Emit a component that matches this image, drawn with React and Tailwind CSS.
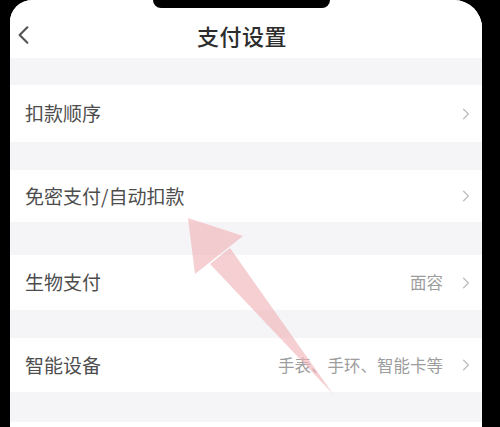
import React from "react";

const rows = [
  { label: "扣款顺序", gap: "h-[27px]", h: "h-[57px]" },
  { label: "免密支付/自动扣款", gap: "h-[28px]", h: "h-[52px]" },
  { label: "生物支付", value: "面容", gap: "h-[33px]", h: "h-[55px]" },
  { label: "智能设备", value: "手表、手环、智能卡等", gap: "h-[28px]", h: "h-[54px]" },
];

function Chevron({ left, className }) {
  return (
    <svg
      viewBox="0 0 10 16"
      className={className}
      fill="none"
      stroke="currentColor"
      strokeWidth={left ? 2 : 1.6}
      strokeLinecap="round"
      strokeLinejoin="round"
    >
      {left ? <path d="M8.5 1 L1.5 8 L8.5 15" /> : <path d="M2 2 L8 8 L2 14" />}
    </svg>
  );
}

function Arrow() {
  return (
    <svg className="absolute inset-0 pointer-events-none" width="500" height="427" viewBox="0 0 500 427">
      <g fill="#f0b2b6" opacity="0.62">
        <polygon points="188,218 243,236 195,274" />
        <polygon points="210,264 230,248 333,394" />
      </g>
    </svg>
  );
}

export default function App() {
  return (
    <div
      className="relative w-[500px] h-[427px] overflow-hidden bg-black pl-[10px] pr-[18px]"
      style={{ fontFamily: '"Noto Sans CJK SC", "Noto Sans", sans-serif' }}
    >
      <div className="h-full bg-[#f5f4f7] rounded-tl-[22px] rounded-tr-[28px] overflow-hidden flex flex-col">
        <div className="h-[58px] bg-white pt-3 shrink-0">
          <div className="h-[46px] flex items-center justify-between pl-[8px] pr-[16px]">
            <Chevron left className="w-[11px] h-[20px] text-[#555]" />
            <div className="text-[22px] font-medium text-[#2c2c2c] tracking-[0.5px]">支付设置</div>
            <div className="w-[11px]" />
          </div>
        </div>
        {rows.map((r) => (
          <div key={r.label}>
            <div className={r.gap} />
            <div className={`${r.h} bg-white flex items-center pl-[15px] pr-[12px]`}>
              <div className="flex-1 text-[19px] text-[#4d4d4d]">{r.label}</div>
              {r.value && <div className="text-[16.5px] text-[#9d9d9d] mr-[19px]">{r.value}</div>}
              <Chevron className="w-[8px] h-[14px] text-[#bdbdbd]" />
            </div>
          </div>
        ))}
        <div className="h-[30px] shrink-0" />
        <div className="flex-1 bg-white" />
      </div>
      <div className="absolute left-[153px] top-0 w-[177px] h-[8px] bg-black rounded-b-[9px]" />
      <Arrow />
    </div>
  );
}
